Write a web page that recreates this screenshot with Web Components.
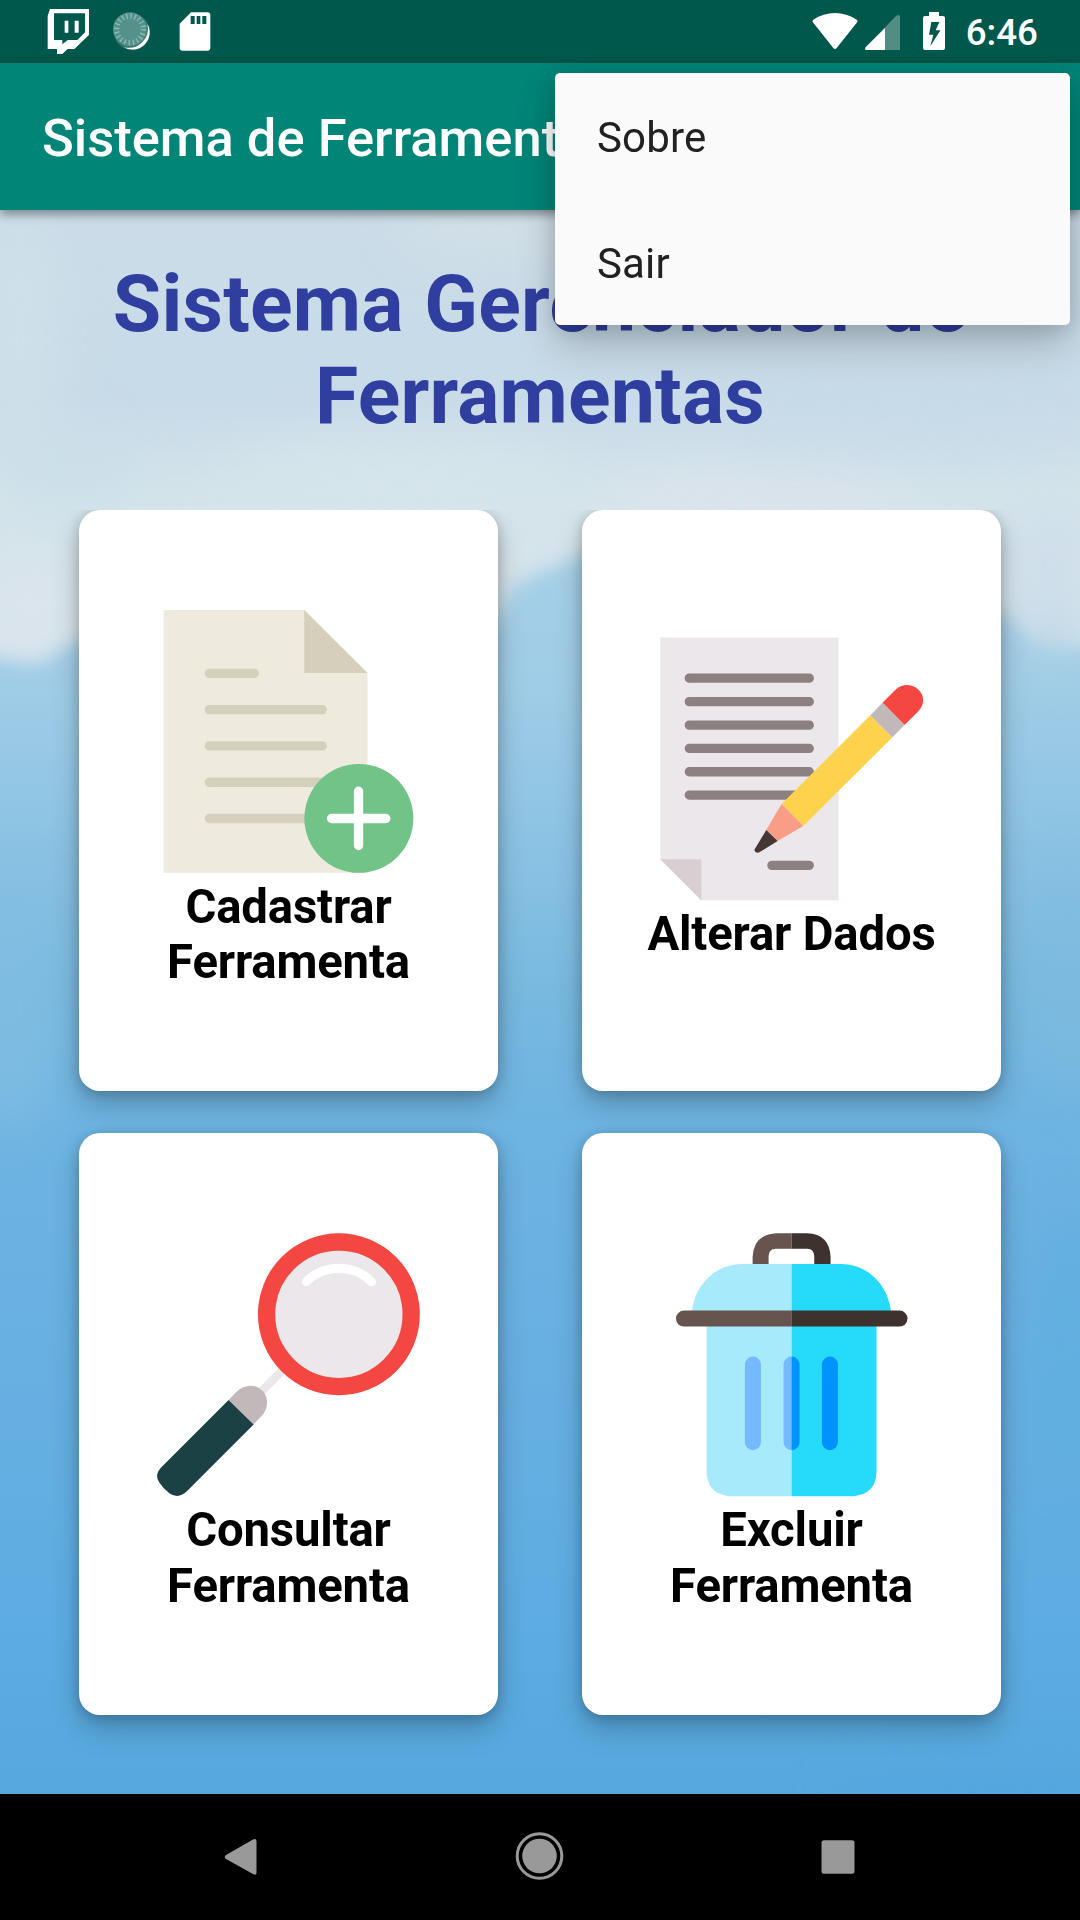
<!DOCTYPE html>
<html lang="pt-BR">
<head>
<meta charset="utf-8">
<title>Sistema de Ferramentas</title>
<style>
  html, body { margin: 0; padding: 0; }
  body { width: 1080px; height: 1920px; overflow: hidden; font-family: Roboto, "Noto Sans", sans-serif; }
</style>
</head>
<body>
<phone-screen>
  <status-bar slot="status">6:46</status-bar>
  <app-bar slot="bar">Sistema de Ferramentas</app-bar>
  <overflow-menu slot="menu">
    <menu-entry>Sobre</menu-entry>
    <menu-entry>Sair</menu-entry>
  </overflow-menu>
  <page-title>Sistema Gerenciador de Ferramentas</page-title>
  <card-grid>
    <tool-card icon="add">Cadastrar Ferramenta</tool-card>
    <tool-card icon="edit">Alterar Dados</tool-card>
    <tool-card icon="search">Consultar Ferramenta</tool-card>
    <tool-card icon="trash">Excluir Ferramenta</tool-card>
  </card-grid>
  <nav-bar slot="nav"></nav-bar>
</phone-screen>
<script>
const define = (name, html) => customElements.define(name, class extends HTMLElement {
  constructor() {
    super();
    this.attachShadow({ mode: 'open' }).innerHTML = html;
  }
});

define('phone-screen', `
<style>
  :host { display: flex; flex-direction: column; width: 1080px; height: 1920px; position: relative; overflow: hidden; background: #000; }
  main { flex: 1; display: grid; overflow: hidden; }
  main > * { grid-area: 1 / 1; }
  .content { display: flex; flex-direction: column; }
  .sky { display: block; }
  ::slotted([slot=menu]) { position: absolute; top: 73px; right: 10px; z-index: 5; }
  ::slotted([slot=bar]) { position: relative; z-index: 2; }
</style>
<slot name="status"></slot>
<slot name="bar"></slot>
<main>
  <svg class="sky" width="1080" height="1584" viewBox="0 210 1080 1584">
    <defs>
      <linearGradient id="sea" gradientUnits="userSpaceOnUse" x1="0" y1="540" x2="0" y2="1794">
        <stop offset="0" stop-color="#a6d0e8"/><stop offset=".12" stop-color="#9fcce7"/>
        <stop offset=".25" stop-color="#8ac2e3"/><stop offset=".37" stop-color="#77b8e0"/>
        <stop offset=".47" stop-color="#6db4e2"/><stop offset=".65" stop-color="#68b0e2"/>
        <stop offset=".85" stop-color="#5eace2"/><stop offset="1" stop-color="#57a8de"/>
      </linearGradient>
      <linearGradient id="air" gradientUnits="userSpaceOnUse" x1="0" y1="210" x2="0" y2="670">
        <stop offset="0" stop-color="#cbdde8"/><stop offset=".4" stop-color="#c7dae8"/>
        <stop offset=".62" stop-color="#d4e4ea"/><stop offset="1" stop-color="#d9e4ec"/>
      </linearGradient>
      <filter id="b6" x="-20%" y="-20%" width="140%" height="140%"><feGaussianBlur stdDeviation="9"/></filter>
      <filter id="b30" x="-50%" y="-50%" width="200%" height="200%" color-interpolation-filters="sRGB"><feGaussianBlur stdDeviation="26"/></filter>
    </defs>
    <rect y="210" width="1080" height="1584" fill="url(#sea)"/>
    <path filter="url(#b6)" fill="url(#air)" d="M-40 150H1120V650L1040 646L1010 618L900 570L600 552L565 562L535 574L515 585L496 620L470 650L300 670L80 640L55 652L38 664L-40 652Z"/>
    <g filter="url(#b30)">
      <ellipse cx="500" cy="232" rx="110" ry="20" fill="#d7e2e6" opacity=".8"/>
      <ellipse cx="20" cy="340" rx="40" ry="130" fill="#cfe2e9" opacity=".8"/>
      <ellipse cx="400" cy="470" rx="180" ry="34" fill="#d6e6eb" opacity=".8"/>
      <ellipse cx="760" cy="500" rx="170" ry="24" fill="#dfe3ec" opacity=".9"/>
      <ellipse cx="900" cy="440" rx="160" ry="22" fill="#c5dae9" opacity=".6"/>
      <ellipse cx="70" cy="470" rx="70" ry="40" fill="#c9dfe9" opacity=".8"/>
      <ellipse cx="1050" cy="560" rx="34" ry="50" fill="#cbdbea" opacity=".8"/>
      <ellipse cx="30" cy="600" rx="35" ry="30" fill="#dee5ec" opacity=".9"/>
      <ellipse cx="1050" cy="645" rx="36" ry="26" fill="#aed1e4" opacity=".9"/>
      <ellipse cx="10" cy="1010" rx="50" ry="130" fill="#83bde2" opacity=".7"/>
      <ellipse cx="1070" cy="980" rx="50" ry="110" fill="#80bbdf" opacity=".6"/>
      <ellipse cx="1070" cy="1340" rx="40" ry="130" fill="#5eade0" opacity=".6"/>
      <ellipse cx="1000" cy="1800" rx="160" ry="20" fill="#4ca6df" opacity=".6"/>
    </g>
  </svg>
  <div class="content"><slot></slot></div>
</main>
<slot name="nav"></slot>
<slot name="menu"></slot>`);

define('status-bar', `
<style>
  :host { box-sizing: border-box; display: flex; align-items: flex-start; height: 63px; flex: none; background: #00574b; color: #fff; padding: 0 42px 0 44px;
    font-size: 36.75px; font-weight: 500; line-height: 66px; }
  svg { display: block; flex: none; }
  .gap { flex: 1; }
  .spin { margin-left: 6.700px; }
  .time { margin-left: 17px; }
</style>
<svg width="50" height="63" viewBox="132 0 150 189" fill="#fff">
  <path fill-rule="evenodd" d="M150 27H267V105L223 147H203L187 162H171V147H143V48ZM162 40V120H187V133L203 120H232L255 97V40Z"/>
  <path d="M194 62h11v36h-11zM224 62h12v36h-12z"/>
</svg>
<svg class="spin" width="60" height="63" viewBox="302 0 180 189">
  <circle cx="395" cy="96" r="54" fill="#fff" opacity=".18"/>
  <circle cx="389" cy="88" r="51" fill="#53918a"/>
  <circle cx="389" cy="88" r="40" fill="none" stroke="#a9c9c5" stroke-width="16" stroke-dasharray="4 8.566" opacity=".7"/>
  <path d="M441 72A51 51 0 0 1 370 141A57 57 0 0 0 441 72Z" fill="#fff"/>
</svg>
<svg width="60" height="63" viewBox="482 0 180 189" fill="#fff">
  <path fill-rule="evenodd" d="M572 37H621Q630 37 630 46V143Q630 152 621 152H547Q538 152 538 143V71ZM571 48V72H583V48ZM589 48V72H600V48ZM606 48V72H618V48Z"/>
</svg>
<span class="gap"></span>
<svg width="137" height="63" viewBox="96 0 411 189" fill="#fff">
  <path d="M98 66Q96 62 100 59Q130 39 165 39Q200 39 230 59Q234 62 232 66L170 144Q165 150 160 144Z"/>
  <path d="M258 141L348 48Q360 40 360 52V150H260Q251 149 258 141Z" opacity=".32"/>
  <path d="M257 142L315 84V150H260Q252 149 257 142Z"/>
  <path fill-rule="evenodd" d="M447 36H477V48H489Q495 48 495 54V144Q495 150 489 150H435Q429 150 429 144V54Q429 48 435 48H447ZM454 66L447 104H460L451 139L481 91H467L478 66Z"/>
</svg>
<span class="time"><slot></slot></span>`);

define('app-bar', `
<style>
  :host { display: flex; align-items: center; box-sizing: border-box; height: 147px; flex: none; padding: 3px 42px 0; background: #008577; color: #fff;
    font-size: 52.5px; font-weight: 500; white-space: nowrap; box-shadow: 0 4px 10px rgba(0,0,0,.42); }
</style>
<slot></slot>`);

define('overflow-menu', `
<style>
  :host { display: flex; flex-direction: column; width: 515px; background: #fafafa; border-radius: 5px;
    box-shadow: 0 20px 40px rgba(0,0,0,.2), 0 3px 22px rgba(0,0,0,.14); }
</style>
<slot></slot>`);

define('menu-entry', `
<style>
  :host { display: flex; align-items: center; box-sizing: border-box; height: 126px; padding: 3px 42px 0; font-size: 42px; color: #212121; letter-spacing: .15px; }
</style>
<slot></slot>`);

define('page-title', `
<style>
  :host { display: block; box-sizing: border-box; height: 300px; padding: 48px 80px 0; text-align: center; font-size: 78.75px; line-height: 92.3px; font-weight: 700; color: #303f9f; letter-spacing: .2px; word-spacing: 1px; }
</style>
<slot></slot>`);

define('card-grid', `
<style>
  :host { display: grid; grid-template: 581px 582px / 419px 419px; gap: 42px 84px; justify-content: center; clip-path: inset(0 -80px -80px -80px); }
</style>
<slot></slot>`);

const ICONS = {
  add: ['51 60 788 788', `
    <path fill="#eeeadd" d="M71 60H493L683 249V849H71Z"/>
    <path fill="#d5d0bb" d="M493 60L683 249H493Z"/>
    <path stroke="#d5d0bb" stroke-width="28" stroke-linecap="round" d="M208 250H343M208 359H547M208 468H547M208 577H547M208 686H547"/>
    <circle cx="657" cy="685.500" r="163.500" fill="#72c387"/>
    <path stroke="#fff" stroke-width="28" stroke-linecap="round" d="M575 686H738M656 604V767"/>`],
  edit: ['90 52.500 788 788', `
    <path fill="#ebe7ea" d="M91 51H626V840H214L91 717Z"/>
    <path fill="#d8cfd2" d="M91 717H214V840Z"/>
    <path stroke="#8c8080" stroke-width="28" stroke-linecap="round" d="M178 173H538M178 243.500H538M178 314H538M178 384H538M178 454H538M178 524H538M426 735H538"/>
    <path fill="#f44742" d="M758 247L797 208C840 168 902 220 872 264L862 276L824 314Z"/>
    <path fill="#c2b7b9" d="M721 285L758 247L824 314L787 351Z"/>
    <path fill="#fed24d" d="M455 551L721 285L787 351L520 617Z"/>
    <path fill="#f99d87" d="M409 629L455 551L520 617L443 662Z"/>
    <path fill="#463634" d="M409 629L443 662L388 696Q378 700 374 691Q373 687 376 684Z"/>`],
  search: ['81 71 788 788', `
    <path stroke="#ebe7ea" stroke-width="26" d="M395 543L470 468"/>
    <circle cx="627" cy="312" r="217" fill="#ebe7ea" stroke="#f44742" stroke-width="52"/>
    <path fill="none" stroke="#fff" stroke-width="27" stroke-linecap="round" d="M529 214Q571 174 627 174Q683 174 725 214"/>
    <path fill="#c2b7b9" d="M296 569L321 544C340 525 374 519 393 538C416 554 417 591 399 613L371 643Z"/>
    <path fill="#1c4144" d="M296 569L371 643L173 841Q146 869 118 849Q100 836 88 817Q72 793 94 771Z"/>`],
  trash: ['60 71 788 788', `
    <path fill="#68544f" d="M338 161V140Q341 72 410 69H455V115H408Q386 116 386 138V161Z"/>
    <path fill="#3e322e" d="M455 69H502Q569 72 572 140V161H523V138Q523 116 502 115H455Z"/>
    <path fill="#a7eafb" d="M455 161H308C228 161 166 222 156 301V325H200V788Q203 853 269 858H455Z"/>
    <path fill="#26daf9" d="M455 161H602C682 161 744 222 753 301V325H710V788Q707 853 640 858H455Z"/>
    <path fill="#68544f" d="M455 301H132A24 24 0 0 0 132 349H455Z"/>
    <path fill="#3e322e" d="M455 301H779A24 24 0 0 1 779 349H455Z"/>
    <rect x="315" y="439" width="48" height="281" rx="24" fill="#75b9ff"/>
    <path fill="#75b9ff" d="M455 439A24 24 0 0 0 431 463V696A24 24 0 0 0 455 720Z"/>
    <path fill="#0093ff" d="M455 439A24 24 0 0 1 479 463V696A24 24 0 0 1 455 720Z"/>
    <rect x="546" y="439" width="48" height="281" rx="24" fill="#0093ff"/>`]
};

customElements.define('tool-card', class extends HTMLElement {
  connectedCallback() {
    const [box, art] = ICONS[this.getAttribute('icon')];
    this.attachShadow({ mode: 'open' }).innerHTML = `
<style>
  :host { display: flex; flex-direction: column; align-items: center; justify-content: center; background: #fff; border-radius: 21px;
    box-shadow: 0 14px 28px rgba(0,0,0,.22), 0 2px 14px rgba(0,0,0,.2); }
  svg { display: block; flex: none; overflow: visible; }
  .label { width: 300px; padding: 7px 0 .3px; text-align: center; font-size: 47.25px; line-height: 55.4px; font-weight: 700; color: #000; letter-spacing: -.15px; }
</style>
<svg width="262.5" height="262.5" viewBox="${box}" fill="none">${art}</svg>
<div class="label"><slot></slot></div>`;
  }
});

define('nav-bar', `
<style>
  :host { display: flex; justify-content: space-between; box-sizing: border-box; height: 126px; flex: none; padding: 0 177px; background: #000; }
  svg { display: block; }
</style>
<svg width="126" height="126" viewBox="177 1794 126 126"><path fill="#999" d="M226 1855L253 1839.500Q256.500 1838 256.500 1841.500V1872.500Q256.500 1876 253 1874L226 1859Q223.500 1857 226 1855Z"/></svg>
<svg width="126" height="126" viewBox="477 1794 126 126"><circle cx="539.500" cy="1856" r="17.300" fill="#999"/><circle cx="539.500" cy="1856" r="22.300" fill="none" stroke="#999" stroke-width="3"/></svg>
<svg width="126" height="126" viewBox="777 1794 126 126"><rect x="821.500" y="1840.300" width="33" height="33.400" rx="2.500" fill="#999"/></svg>`);
</script>
</body>
</html>
